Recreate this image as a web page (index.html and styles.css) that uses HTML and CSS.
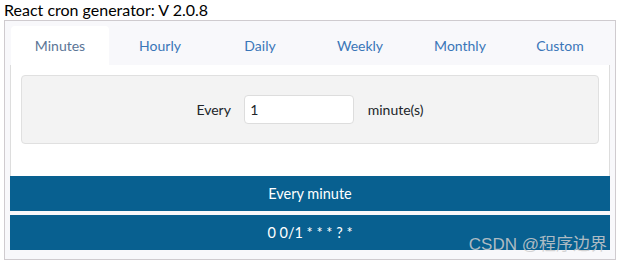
FILE: index.html
```html
<!DOCTYPE html>
<html>
<head>
<meta charset="utf-8">
<link rel="stylesheet" href="styles.css">
</head>
<body>
<div class="page">
  <div class="title">React cron generator: V 2.0.8</div>
  <div class="cron_builder">
    <ul class="nav">
      <li><a class="active">Minutes</a></li>
      <li><a>Hourly</a></li>
      <li><a>Daily</a></li>
      <li><a>Weekly</a></li>
      <li><a>Monthly</a></li>
      <li><a>Custom</a></li>
    </ul>
    <div class="bordering">
      <div class="well">
        <span>Every</span>
        <input class="num" type="text" value="1">
        <span>minute(s)</span>
      </div>
    </div>
    <div class="bg">Every minute</div>
    <div class="bg">0 0/1 * * * ? *</div>
    <div class="watermark">CSDN @程序边界</div>
  </div>
</div>
</body>
</html>
```
FILE: styles.css
```css
html, body {
  margin: 0;
  padding: 0;
  background: #fff;
}
body {
  font-family: Lato, "Noto Sans", sans-serif;
  font-size: 14px;
  color: #212529;
}
.page {
  padding: 0 0 0 4px;
}
.title {
  font-size: 16px;
  line-height: 20px;
  color: #000;
  height: 20px;
}
.cron_builder {
  position: relative;
  width: 600px;
  border: 1px solid #cfcbcf;
  padding: 5px;
  background: #f8f8fb;
}
.nav {
  display: flex;
  list-style: none;
  margin: 0;
  padding: 0;
  height: 39px;
}
.nav li {
  flex: 0 0 100px;
  display: flex;
}
.nav li a {
  flex: 1;
  display: flex;
  align-items: center;
  justify-content: center;
  color: #3a76b8;
  margin: 0 1px;
  border-radius: 4px 4px 0 0;
  font-size: 14px;
}
.nav li a.active {
  background: #fff;
  color: #5b7596;
}
.bordering {
  background: #fff;
  border-left: 1px solid #ddd;
  border-right: 1px solid #ddd;
  padding: 10px 10px 32px;
}
.well {
  background: #f3f3f3;
  border: 1px solid #e0e0e0;
  border-radius: 4px;
  padding: 19px;
  text-align: center;
  line-height: 29px;
  height: 29px;
}
.num {
  box-sizing: border-box;
  width: 110px;
  height: 29px;
  margin: 0 10px;
  border: 1px solid #ddd;
  border-radius: 4px;
  padding: 0 0 0 5px;
  font-family: inherit;
  font-size: 14px;
  color: #212529;
  vertical-align: top;
  outline: none;
}
.bg {
  background: #086090;
  color: #fff;
  text-align: center;
  height: 35px;
  line-height: 35px;
  margin-bottom: 4px;
  font-size: 14.5px;
}
.watermark {
  position: absolute;
  right: 8px;
  bottom: 4px;
  font-family: "Liberation Sans", "Noto Sans CJK SC", sans-serif;
  font-size: 17px;
  color: rgba(205, 205, 205, 0.85);
  line-height: 20px;
}
```
